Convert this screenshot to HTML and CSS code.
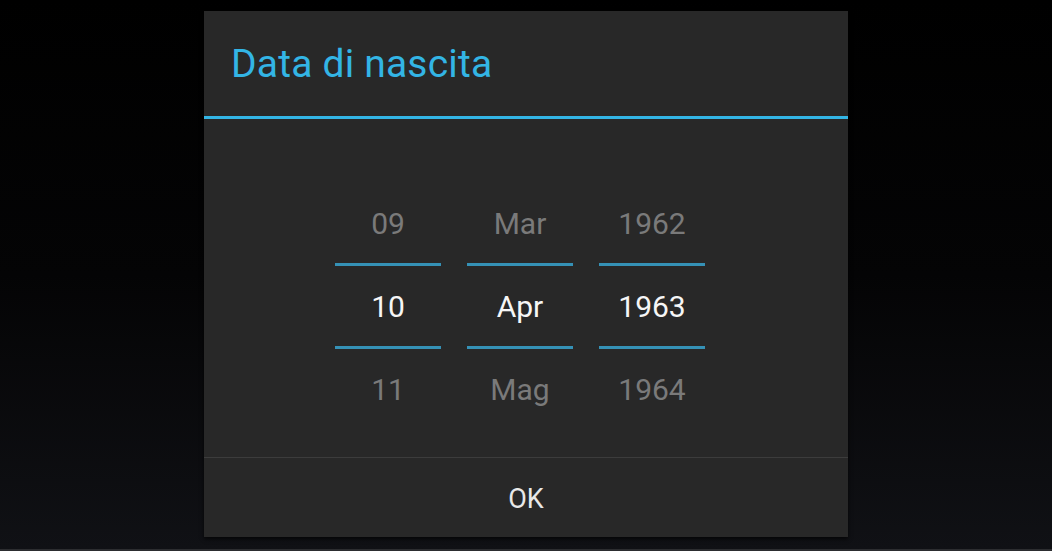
FILE: index.html
```html
<!DOCTYPE html>
<html lang="it">
<head>
<meta charset="utf-8">
<title>Data di nascita</title>
<link rel="stylesheet" href="styles.css">
</head>
<body>
<div class="screen">
  <div class="dialog">
    <div class="header"><h1 class="title">Data di nascita</h1></div>
    <div class="title-rule"></div>
    <div class="content">
      <div class="pickers">
        <div class="picker">
          <div class="cell dim">09</div>
          <div class="rule"></div>
          <div class="cell sel">10</div>
          <div class="rule"></div>
          <div class="cell dim">11</div>
        </div>
        <div class="picker">
          <div class="cell dim">Mar</div>
          <div class="rule"></div>
          <div class="cell sel">Apr</div>
          <div class="rule"></div>
          <div class="cell dim">Mag</div>
        </div>
        <div class="picker">
          <div class="cell dim">1962</div>
          <div class="rule"></div>
          <div class="cell sel">1963</div>
          <div class="rule"></div>
          <div class="cell dim">1964</div>
        </div>
      </div>
    </div>
    <div class="actions"><button class="ok">OK</button></div>
  </div>
</div>
</body>
</html>
```
FILE: styles.css
```css
html, body {
  margin: 0;
  padding: 0;
}
body {
  width: 1052px;
  height: 551px;
  overflow: hidden;
  background: #000;
  font-family: Roboto, "Noto Sans", sans-serif;
}
.screen {
  box-sizing: border-box;
  height: 551px;
  padding-top: 11px;
  padding-left: 204px;
  background: linear-gradient(to bottom, #000 0%, #040405 50%, #101115 100%);
  border-bottom: 2px solid #2c2d30;
}
.dialog {
  width: 644px;
  height: 526px;
  background: #282828;
  display: flex;
  flex-direction: column;
  box-shadow: 0 2px 4px rgba(0, 0, 0, 0.7);
}
.header {
  height: 105px;
  display: flex;
  align-items: center;
  padding-left: 27px;
}
.title {
  margin: 0;
  font-weight: 400;
  font-size: 39px;
  color: #33b5e5;
  letter-spacing: 0.2px;
}
.title-rule {
  height: 3px;
  background: #33b5e5;
}
.content {
  flex: 1;
  padding-top: 64px;
  padding-left: 131px;
  border-bottom: 1px solid #3c3c3c;
}
.pickers {
  display: flex;
  gap: 26px;
}
.picker {
  width: 106px;
  display: flex;
  flex-direction: column;
}
.cell {
  height: 80px;
  display: flex;
  align-items: center;
  justify-content: center;
  font-size: 30px;
}
.cell.dim {
  color: #7a7a7a;
}
.cell.sel {
  color: #f6f6f6;
}
.rule {
  height: 3px;
  background: #3591b6;
}
.actions {
  height: 79px;
  box-sizing: border-box;
  padding-top: 3px;
  display: flex;
  align-items: center;
  justify-content: center;
}
.ok {
  background: none;
  border: none;
  padding: 0;
  font-family: Roboto, "Noto Sans", sans-serif;
  font-size: 27px;
  color: #e8e8e8;
}
```
